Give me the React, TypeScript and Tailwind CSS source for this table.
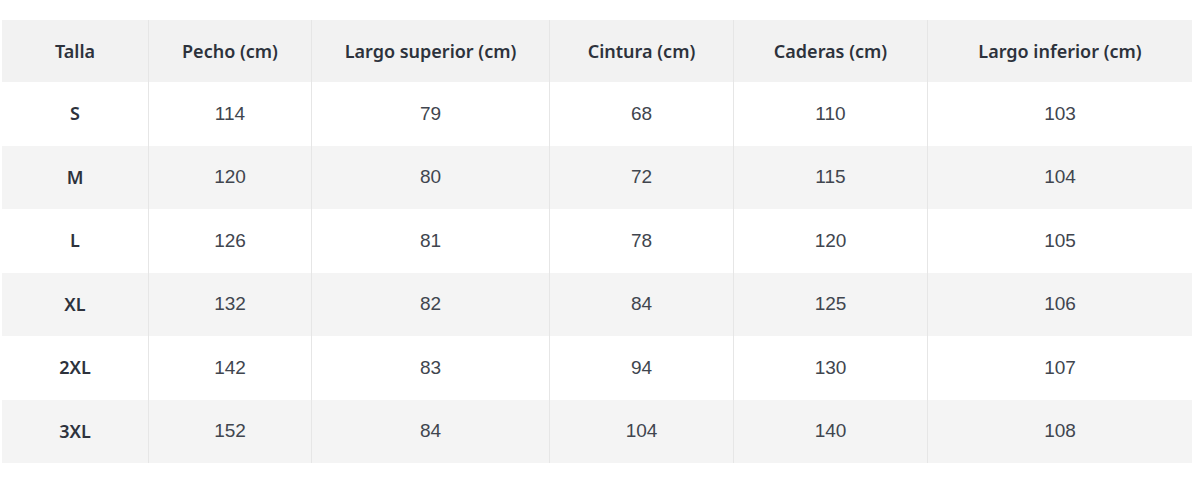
const COLS = [
  { label: "Talla", w: "w-[146px]" },
  { label: "Pecho (cm)", w: "w-[163px]" },
  { label: "Largo superior (cm)", w: "w-[238px]" },
  { label: "Cintura (cm)", w: "w-[184px]" },
  { label: "Caderas (cm)", w: "w-[194px]" },
  { label: "Largo inferior (cm)", w: "w-[265px]" },
];

const ROWS: [string, number, number, number, number, number][] = [
  ["S", 114, 79, 68, 110, 103],
  ["M", 120, 80, 72, 115, 104],
  ["L", 126, 81, 78, 120, 105],
  ["XL", 132, 82, 84, 125, 106],
  ["2XL", 142, 83, 94, 130, 107],
  ["3XL", 152, 84, 104, 140, 108],
];

const bold = "text-[18px] font-semibold text-[#2d323c] font-['Noto_Sans',sans-serif]";

export default function App() {
  return (
    <div className="w-[1200px] h-[492px] bg-white pt-[20px] pl-[2px]">
      <div className="w-[1190px] flex flex-col">
        {/* Header */}
        <div className="flex h-[62px] bg-[#f2f2f2]">
          {COLS.map((c, i) => (
            <div
              key={c.label}
              className={`${c.w} flex items-center justify-center ${bold} ${
                i > 0 ? "border-l border-[#e6e6e6]" : ""
              }`}
            >
              {c.label}
            </div>
          ))}
        </div>

        {ROWS.map((row, r) => (
          <div
            key={row[0]}
            className={`flex h-[63.5px] ${r % 2 === 1 ? "bg-[#f4f4f4]" : "bg-white"}`}
          >
            {row.map((v, i) => (
              <div
                key={i}
                className={`${COLS[i].w} flex items-center justify-center ${
                  i > 0 ? "border-l border-[#e6e6e6]" : ""
                } ${
                  i === 0
                    ? bold
                    : "text-[19px] text-[#40454e] font-['Liberation_Sans',Arial,sans-serif]"
                }`}
              >
                {v}
              </div>
            ))}
          </div>
        ))}
      </div>
    </div>
  );
}
